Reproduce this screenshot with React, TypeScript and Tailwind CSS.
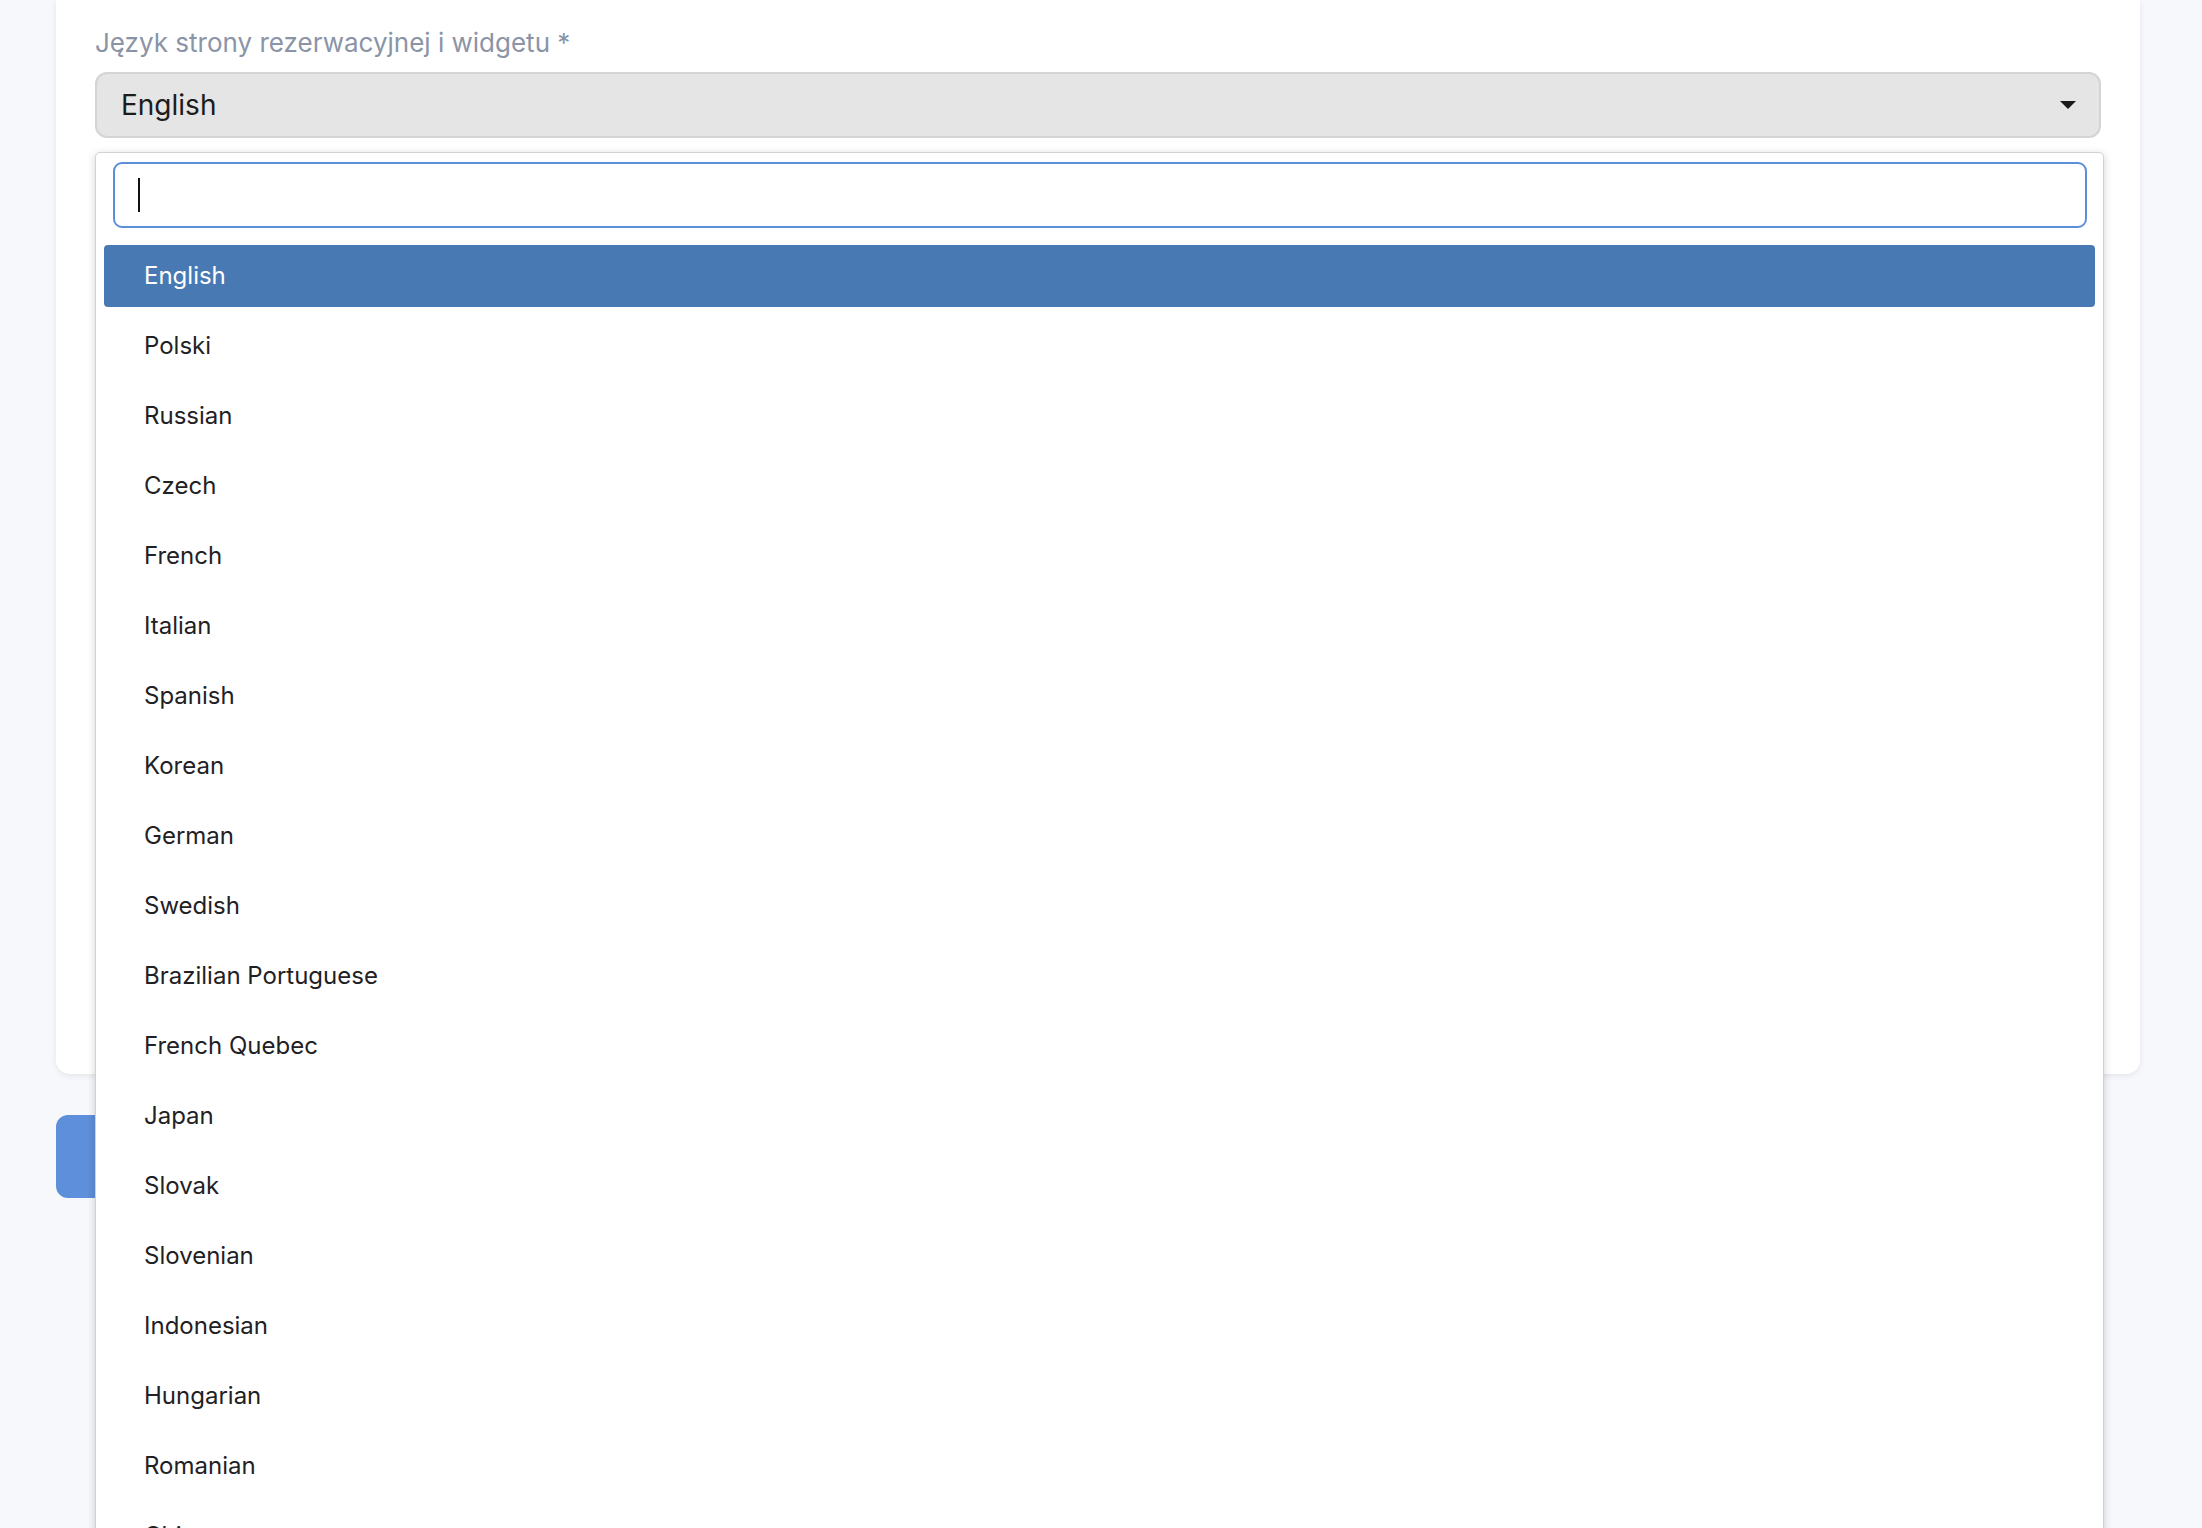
import React from 'react'

const LANGUAGES = [
    'English',
    'Polski',
    'Russian',
    'Czech',
    'French',
    'Italian',
    'Spanish',
    'Korean',
    'German',
    'Swedish',
    'Brazilian Portuguese',
    'French Quebec',
    'Japan',
    'Slovak',
    'Slovenian',
    'Indonesian',
    'Hungarian',
    'Romanian',
    'Chinese',
    'Turkish',
]

export default function App() {
    const selected = 'English'

    return (
        <div className="relative h-[1528px] overflow-hidden bg-[#f6f8fb] font-['Inter','Noto_Sans',sans-serif]">
            {/* Settings card */}
            <div className="ml-[56px] w-[2084px] h-[1074px] bg-white rounded-b-[14px] shadow-[0_2px_6px_rgba(0,0,0,0.08)] px-[39px] pt-[25px]">
                <label className="block text-[26px] leading-[36px] text-[#8a94a6]">
                    Język strony rezerwacyjnej i widgetu *
                </label>

                <div className="relative mt-[11px]">
                    {/* Select trigger */}
                    <div className="flex items-center justify-between h-[66px] rounded-[12px] border-2 border-[#d4d4d4] bg-[#e5e5e5] pl-[24px] pr-[24px]">
                        <span className="text-[28px] text-[#1c1c1c]">{selected}</span>
                        <svg className="w-[16px] h-[8px] mr-[-1px]" viewBox="0 0 16 8">
                            <path d="M0 0h16L8 8z" fill="#1a1a1a" />
                        </svg>
                    </div>

                    {/* Dropdown panel */}
                    <div className="absolute left-0 right-[-3px] top-full mt-[14px] z-10 bg-white border border-[#d2d2d2] rounded-[5px] shadow-[0_2px_8px_rgba(0,0,0,0.18)] pt-[9px] px-[8px] pb-[8px]">
                        <div className="ml-[9px] mr-[8px] h-[66px] flex items-center rounded-[9px] border-2 border-[#5b8fd9] pl-[23px]">
                            <span className="w-[2px] h-[34px] bg-[#111]" />
                        </div>

                        <ul className="mt-[17px] flex flex-col gap-[8px]">
                            {LANGUAGES.map((lang) => (
                                <li
                                    key={lang}
                                    className={`h-[62px] flex items-center pl-[40px] rounded-[4px] text-[24px] ${
                                        lang === selected
                                            ? 'bg-[#4879b2] text-white'
                                            : 'text-[#1f2124]'
                                    }`}
                                >
                                    {lang}
                                </li>
                            ))}
                        </ul>
                    </div>
                </div>
            </div>

            {/* Save button (mostly hidden under dropdown) */}
            <div className="ml-[56px] mt-[41px] w-[320px] h-[83px] rounded-[12px] bg-[#5e8fdb]" />
        </div>
    )
}
